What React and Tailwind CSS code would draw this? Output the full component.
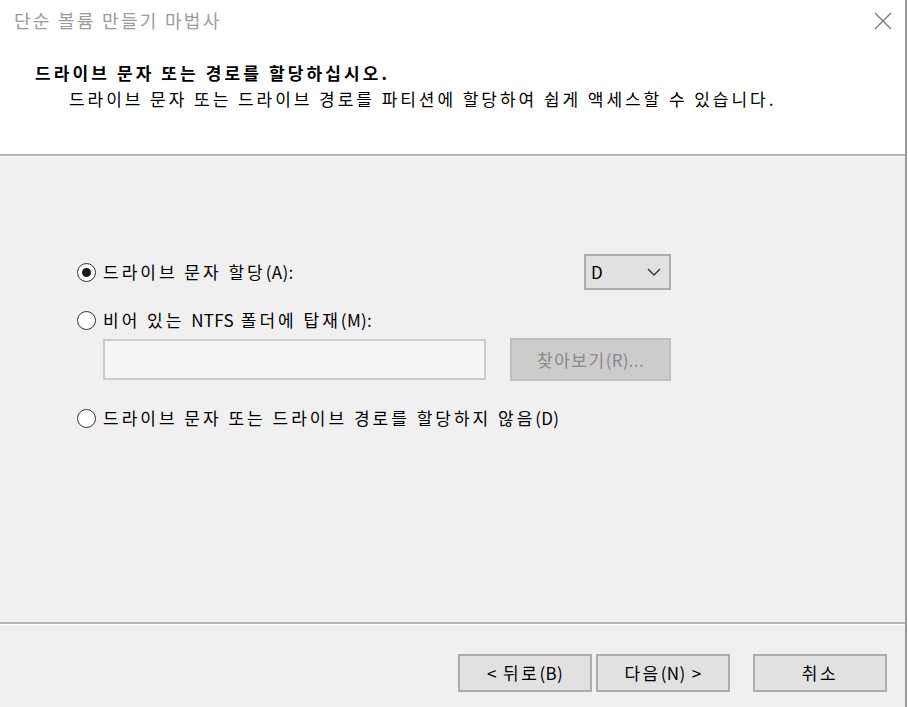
import React from 'react';

const font = "font-['Noto_Sans_CJK_KR','Liberation_Sans',sans-serif]";

// Hangul in the dialog font runs wide, latin runs tight
function T({ text }) {
  const parts = text.split(/([A-Za-z().:<>]+)/);
  return (
    <span className="whitespace-pre">
      {parts.map((p, i) =>
        /[A-Za-z().:<>]/.test(p) ? (
          <span key={i} className="tracking-[0.3px]">{p}</span>
        ) : (
          <span key={i}>{p}</span>
        )
      )}
    </span>
  );
}

function Radio({ checked, label }) {
  return (
    <div className="flex items-center h-[24px]">
      <span className="w-[19px] h-[19px] rounded-full border-[1.5px] border-[#333333] bg-white flex items-center justify-center shrink-0">
        {checked && <span className="w-[9px] h-[9px] rounded-full bg-[#1a1a1a]" />}
      </span>
      <span className="ml-[7px] text-[17px] leading-[22px] tracking-[3px] text-black whitespace-nowrap">
        <T text={label} />
      </span>
    </div>
  );
}

function WinButton({ children, className = '' }) {
  return (
    <button className={`h-[38px] w-[134px] bg-[#e1e1e1] border-2 border-[#adadad] text-[17px] tracking-[2.5px] text-black flex items-center justify-center ${className}`}>
      <T text={children} />
    </button>
  );
}

export default function App() {
  return (
    <div className={`w-[908px] h-[707px] flex bg-[#f0f0f0] ${font}`}>
      <div className="w-[905px] flex flex-col">
        {/* header */}
        <div className="h-[154px] bg-white flex flex-col">
          <div className="flex items-start justify-between h-[44px]">
            <div className="pl-[14px] pt-[8px] text-[18px] leading-[24px] tracking-[2.3px] text-[#9b9b9b]">단순 볼륨 만들기 마법사</div>
            <svg className="mt-[12px] mr-[13px]" width="18" height="18" viewBox="0 0 18 18">
              <path d="M1 1 L17 17 M17 1 L1 17" stroke="#777777" strokeWidth="1.3" fill="none" />
            </svg>
          </div>
          <div className="pl-[35px] pt-[18px] text-[17px] leading-[22px] tracking-[3.1px] font-bold text-black">드라이브 문자 또는 경로를 할당하십시오.</div>
          <div className="pl-[69px] pt-[4px] text-[17px] leading-[22px] tracking-[2.95px] text-black">드라이브 문자 또는 드라이브 경로를 파티션에 할당하여 쉽게 액세스할 수 있습니다.</div>
        </div>
        <div className="h-[2px] bg-[#b4b4b4]" />
        <div className="h-[1px] bg-white" />

        {/* body */}
        <div className="h-[465px] pl-[77px] pt-[97px] flex flex-col">
          <div className="w-[594px] h-[36px] flex items-center justify-between">
            <Radio checked label="드라이브 문자 할당(A):" />
            <div className="w-[87px] h-[36px] bg-[#e1e1e1] border-2 border-[#adadad] flex items-center justify-between pl-[5px] pr-[8px]">
              <span className="text-[17px] text-black">D</span>
              <svg width="14" height="8" viewBox="0 0 14 8">
                <path d="M1 1 L7 7 L13 1" stroke="#333333" strokeWidth="1.4" fill="none" />
              </svg>
            </div>
          </div>
          <div className="mt-[18px]">
            <Radio label="비어 있는 NTFS 폴더에 탑재(M):" />
          </div>
          <div className="mt-[6px] pl-[26px] flex items-center h-[43px]">
            <div className="w-[383px] h-[41px] bg-[#f5f5f5] border-2 border-[#cccccc]" />
            <div className="ml-[24px] w-[161px] h-[43px] bg-[#cccccc] border-2 border-[#bfbfbf] flex items-center justify-center text-[17px] tracking-[1.5px] text-[#8a8a8a]">
              <T text="찾아보기(R)..." />
            </div>
          </div>
          <div className="mt-[25px]">
            <Radio label="드라이브 문자 또는 드라이브 경로를 할당하지 않음(D)" />
          </div>
        </div>

        <div className="h-[2px] bg-[#b4b4b4]" />
        <div className="h-[1px] bg-white" />

        {/* footer */}
        <div className="flex-1 pt-[29px] pl-[458px] flex items-start">
          <WinButton>{'< 뒤로(B)'}</WinButton>
          <WinButton className="ml-[4px]">{'다음(N) >'}</WinButton>
          <WinButton className="ml-[23px]">취소</WinButton>
        </div>
      </div>
      <div className="w-[2px] bg-[#9a9a9a]" />
      <div className="w-[1px] bg-white" />
    </div>
  );
}
